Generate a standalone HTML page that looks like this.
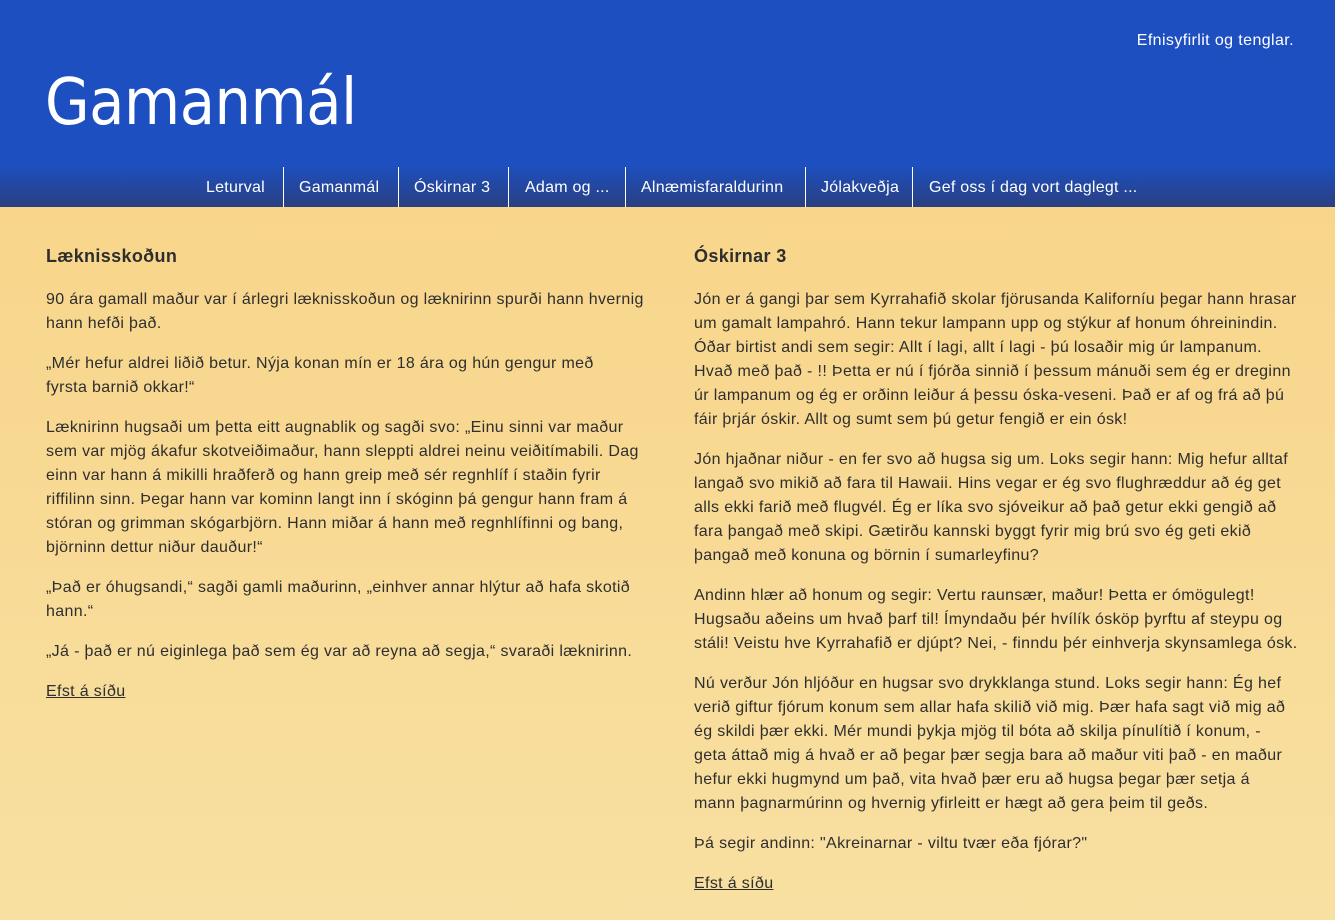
<!DOCTYPE html>
<html><head><meta charset="utf-8"><style>
*{margin:0;padding:0;box-sizing:border-box}
body{width:1335px;height:920px;overflow:hidden;font-family:"Liberation Sans","DejaVu Sans",sans-serif;color:#2e2e2e;background:linear-gradient(#f8d283,#f8e0a2);}
header{position:absolute;left:0;top:0;width:1335px;height:207px;background:linear-gradient(#1d4fc0 0,#1d4fc0 165px,#2a4080 207px);}
.top{position:absolute;right:41px;top:32px;color:#fff;font-size:16px;letter-spacing:0.4px}
h1{position:absolute;left:45px;top:66px;color:#fff;font-size:64px;letter-spacing:-0.5px;font-family:"DejaVu Sans","Liberation Sans",sans-serif;font-weight:normal;transform:scaleX(0.9);transform-origin:left}
nav{position:absolute;top:168px;height:40px;left:0;width:1335px}
nav a{position:absolute;top:0;height:40px;line-height:40px;color:#fff;font-size:16px;text-decoration:none;white-space:nowrap;letter-spacing:0.25px}
.sep{position:absolute;top:167px;width:1px;height:40px;background:#fff}
.col{position:absolute;top:243px;font-size:16px;line-height:24px;letter-spacing:0.35px}
.col h2{font-size:18px;font-weight:bold;line-height:26px;margin-bottom:19px}
.col p{margin-bottom:16px;white-space:nowrap}
.col a{color:#2e2e2e}
</style></head><body>
<header>
<div class="top">Efnisyfirlit og tenglar.</div>
<h1>Gamanmál</h1>
<nav>
<a style="left:206px">Leturval</a>
<a style="left:299px">Gamanmál</a>
<a style="left:414px">Óskirnar 3</a>
<a style="left:525px">Adam og ...</a>
<a style="left:641px">Alnæmisfaraldurinn</a>
<a style="left:821px">Jólakveðja</a>
<a style="left:929px">Gef oss í dag vort daglegt ...</a>
</nav>
<div class="sep" style="left:283px"></div><div class="sep" style="left:398px"></div><div class="sep" style="left:508px"></div><div class="sep" style="left:625px"></div><div class="sep" style="left:805px"></div><div class="sep" style="left:912px"></div>
</header>
<div class="col" style="left:46px">
<h2>Læknisskoðun</h2>
<p>90 ára gamall maður var í árlegri læknisskoðun og læknirinn spurði hann hvernig<br>hann hefði það.</p>
<p>„Mér hefur aldrei liðið betur. Nýja konan mín er 18 ára og hún gengur með<br>fyrsta barnið okkar!“</p>
<p>Læknirinn hugsaði um þetta eitt augnablik og sagði svo: „Einu sinni var maður<br>sem var mjög ákafur skotveiðimaður, hann sleppti aldrei neinu veiðitímabili. Dag<br>einn var hann á mikilli hraðferð og hann greip með sér regnhlíf í staðin fyrir<br>riffilinn sinn. Þegar hann var kominn langt inn í skóginn þá gengur hann fram á<br>stóran og grimman skógarbjörn. Hann miðar á hann með regnhlífinni og bang,<br>björninn dettur niður dauður!“</p>
<p>„Það er óhugsandi,“ sagði gamli maðurinn, „einhver annar hlýtur að hafa skotið<br>hann.“</p>
<p>„Já - það er nú eiginlega það sem ég var að reyna að segja,“ svaraði læknirinn.</p>
<p><a href="#">Efst á síðu</a></p>
</div>
<div class="col" style="left:694px">
<h2>Óskirnar 3</h2>
<p>Jón er á gangi þar sem Kyrrahafið skolar fjörusanda Kaliforníu þegar hann hrasar<br>um gamalt lampahró. Hann tekur lampann upp og stýkur af honum óhreinindin.<br>Óðar birtist andi sem segir: Allt í lagi, allt í lagi - þú losaðir mig úr lampanum.<br>Hvað með það - !! Þetta er nú í fjórða sinnið í þessum mánuði sem ég er dreginn<br>úr lampanum og ég er orðinn leiður á þessu óska-veseni. Það er af og frá að þú<br>fáir þrjár óskir. Allt og sumt sem þú getur fengið er ein ósk!</p>
<p>Jón hjaðnar niður - en fer svo að hugsa sig um. Loks segir hann: Mig hefur alltaf<br>langað svo mikið að fara til Hawaii. Hins vegar er ég svo flughræddur að ég get<br>alls ekki farið með flugvél. Ég er líka svo sjóveikur að það getur ekki gengið að<br>fara þangað með skipi. Gætirðu kannski byggt fyrir mig brú svo ég geti ekið<br>þangað með konuna og börnin í sumarleyfinu?</p>
<p>Andinn hlær að honum og segir: Vertu raunsær, maður! Þetta er ómögulegt!<br>Hugsaðu aðeins um hvað þarf til! Ímyndaðu þér hvílík ósköp þyrftu af steypu og<br>stáli! Veistu hve Kyrrahafið er djúpt? Nei, - finndu þér einhverja skynsamlega ósk.</p>
<p>Nú verður Jón hljóður en hugsar svo drykklanga stund. Loks segir hann: Ég hef<br>verið giftur fjórum konum sem allar hafa skilið við mig. Þær hafa sagt við mig að<br>ég skildi þær ekki. Mér mundi þykja mjög til bóta að skilja pínulítið í konum, -<br>geta áttað mig á hvað er að þegar þær segja bara að maður viti það - en maður<br>hefur ekki hugmynd um það, vita hvað þær eru að hugsa þegar þær setja á<br>mann þagnarmúrinn og hvernig yfirleitt er hægt að gera þeim til geðs.</p>
<p>Þá segir andinn: "Akreinarnar - viltu tvær eða fjórar?"</p>
<p><a href="#">Efst á síðu</a></p>
</div>
</body></html>
